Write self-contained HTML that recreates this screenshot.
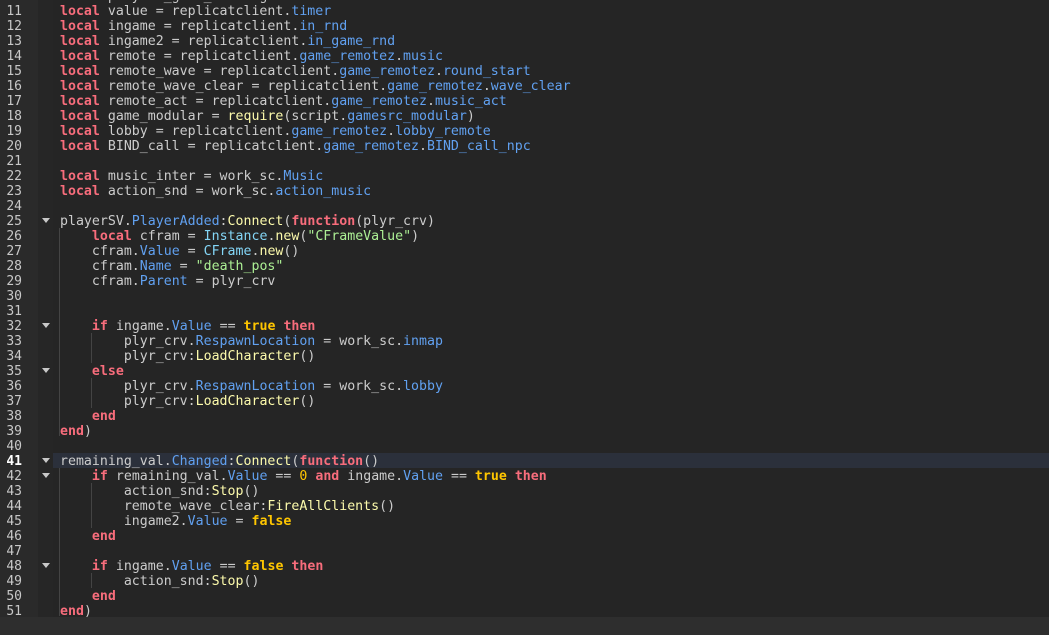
<!DOCTYPE html>
<html><head><meta charset="utf-8"><style>
html,body{margin:0;padding:0;width:1049px;height:635px;overflow:hidden;background:#252525;}
#g{position:absolute;left:0;top:0;width:38px;height:617px;background:#2a2a2a;}
#g2{position:absolute;left:38px;top:0;width:15px;height:617px;background:#262626;}
#bar{position:absolute;left:0;top:617px;width:1049px;height:18px;background:#2e2e2e;}
#hl{position:absolute;left:53px;top:453px;width:996px;height:15px;background:#2b303b;}
.ln{position:absolute;left:0;width:22px;text-align:right;font:13px "DejaVu Sans Mono","Liberation Mono",monospace;color:#c8c8c8;line-height:15px;}
.c{position:absolute;left:60px;white-space:pre;font:13.25px "DejaVu Sans Mono","Liberation Mono",monospace;color:#cccccc;line-height:15px;}
.k{color:#f86d7c;font-weight:bold}
.p{color:#61a1f1}
.b{color:#84d6f7}
.m{color:#fdfbac}
.s{color:#adf195}
.t{color:#ffc600;font-weight:bold}
.n{color:#ffc600}
.f{position:absolute;left:42px;width:0;height:0;border-left:4px solid transparent;border-right:4px solid transparent;border-top:5px solid #c8c8c8;}
.v{position:absolute;width:1px;background:#444;}
</style></head><body>
<div id="g"></div><div id="g2"></div><div id="hl"></div><div id="bar"></div>
<div class="v" style="left:59px;top:228px;height:208px"></div>
<div class="v" style="left:59px;top:468px;height:148px"></div>
<div class="v" style="left:91px;top:333px;height:30px"></div>
<div class="v" style="left:91px;top:378px;height:30px"></div>
<div class="v" style="left:91px;top:483px;height:45px"></div>
<div class="v" style="left:91px;top:573px;height:15px"></div>
<div id="code"></div>
<script>
const L={
10:'<span class="k">local</span> players_game_rnd = game.Work',
11:'<span class="k">local</span> value = replicatclient.<span class="p">timer</span>',
12:'<span class="k">local</span> ingame = replicatclient.<span class="p">in_rnd</span>',
13:'<span class="k">local</span> ingame2 = replicatclient.<span class="p">in_game_rnd</span>',
14:'<span class="k">local</span> remote = replicatclient.<span class="p">game_remotez</span>.<span class="p">music</span>',
15:'<span class="k">local</span> remote_wave = replicatclient.<span class="p">game_remotez</span>.<span class="p">round_start</span>',
16:'<span class="k">local</span> remote_wave_clear = replicatclient.<span class="p">game_remotez</span>.<span class="p">wave_clear</span>',
17:'<span class="k">local</span> remote_act = replicatclient.<span class="p">game_remotez</span>.<span class="p">music_act</span>',
18:'<span class="k">local</span> game_modular = <span class="m">require</span>(script.<span class="p">gamesrc_modular</span>)',
19:'<span class="k">local</span> lobby = replicatclient.<span class="p">game_remotez</span>.<span class="p">lobby_remote</span>',
20:'<span class="k">local</span> BIND_call = replicatclient.<span class="p">game_remotez</span>.<span class="p">BIND_call_npc</span>',
21:'',
22:'<span class="k">local</span> music_inter = work_sc.<span class="p">Music</span>',
23:'<span class="k">local</span> action_snd = work_sc.<span class="p">action_music</span>',
24:'',
25:'playerSV.<span class="p">PlayerAdded</span>:<span class="m">Connect</span>(<span class="k">function</span>(plyr_crv)',
26:'    <span class="k">local</span> cfram = <span class="b">Instance</span>.<span class="m">new</span>(<span class="s">"CFrameValue"</span>)',
27:'    cfram.<span class="p">Value</span> = <span class="b">CFrame</span>.<span class="m">new</span>()',
28:'    cfram.<span class="p">Name</span> = <span class="s">"death_pos"</span>',
29:'    cfram.<span class="p">Parent</span> = plyr_crv',
30:'',31:'',
32:'    <span class="k">if</span> ingame.<span class="p">Value</span> == <span class="t">true</span> <span class="k">then</span>',
33:'        plyr_crv.<span class="p">RespawnLocation</span> = work_sc.<span class="p">inmap</span>',
34:'        plyr_crv:<span class="m">LoadCharacter</span>()',
35:'    <span class="k">else</span>',
36:'        plyr_crv.<span class="p">RespawnLocation</span> = work_sc.<span class="p">lobby</span>',
37:'        plyr_crv:<span class="m">LoadCharacter</span>()',
38:'    <span class="k">end</span>',
39:'<span class="k">end</span>)',
40:'',
41:'remaining_val.<span class="p">Changed</span>:<span class="m">Connect</span>(<span class="k">function</span>()',
42:'    <span class="k">if</span> remaining_val.<span class="p">Value</span> == <span class="n">0</span> <span class="k">and</span> ingame.<span class="p">Value</span> == <span class="t">true</span> <span class="k">then</span>',
43:'        action_snd:<span class="m">Stop</span>()',
44:'        remote_wave_clear:<span class="m">FireAllClients</span>()',
45:'        ingame2.<span class="p">Value</span> = <span class="t">false</span>',
46:'    <span class="k">end</span>',
47:'',
48:'    <span class="k">if</span> ingame.<span class="p">Value</span> == <span class="t">false</span> <span class="k">then</span>',
49:'        action_snd:<span class="m">Stop</span>()',
50:'    <span class="k">end</span>',
51:'<span class="k">end</span>)'};
let h='';
for(let n=10;n<=51;n++){const y=3+(n-11)*15;
h+=`<div class="ln" style="top:${y+1}px;${n==41?'color:#fff;font-weight:bold':''}">${n}</div><div class="c" style="top:${y+1}px">${L[n]}</div>`;
if([25,32,35,41,42,48].includes(n))h+=`<div class="f" style="top:${y+5}px"></div>`;}
document.getElementById('code').innerHTML=h;
</script>
</body></html>
